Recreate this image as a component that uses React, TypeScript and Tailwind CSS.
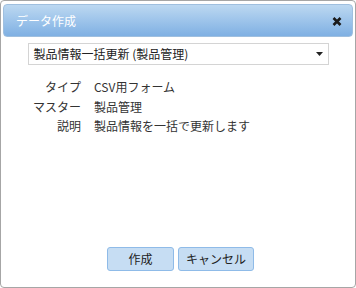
import React from "react";

const font = { fontFamily: '"Noto Sans CJK JP", "Noto Sans", sans-serif' };

export default function App() {
  return (
    <div
      className="w-[356px] h-[288px] bg-white border border-[#a6a6a6] rounded-[4px] flex flex-col pt-[3px] px-[2px] text-[#333]"
      style={font}
    >
      <div className="h-[33px] border border-[#9fbfdf] rounded-[4px] bg-gradient-to-b from-[#bcd8f1] to-[#7fb0e3] flex items-center pl-[12px] pr-[10px]">
        <span className="text-white text-[12px] leading-none flex-1">データ作成</span>
        <svg width="10" height="9" viewBox="0 0 10 9" className="mt-[1px]">
          <path d="M1.5 1 L8.5 8 M8.5 1 L1.5 8" stroke="#1a1a1a" strokeWidth="2.6" strokeLinecap="butt" />
        </svg>
      </div>

      <div className="mt-[6px] mx-auto w-[301px] h-[22px] border border-[#d4d4d4] flex items-center pl-[5px] pr-[5px] text-[12px] text-[#222]">
        <span className="flex-1 leading-none">製品情報一括更新 (製品管理)</span>
        <svg width="7" height="4" viewBox="0 0 7 4">
          <path d="M0 0 H7 L3.5 4 Z" fill="#222" />
        </svg>
      </div>

      <div className="mt-[12px] grid grid-cols-[51px_1fr] gap-x-[13px] pl-[27px] text-[12px] leading-[19.5px] text-[#333]">
        <span className="text-right">タイプ</span>
        <span>CSV用フォーム</span>
        <span className="text-right">マスター</span>
        <span>製品管理</span>
        <span className="text-right">説明</span>
        <span>製品情報を一括で更新します</span>
      </div>

      <div className="flex-1" />

      <div className="flex justify-center gap-[4px] pl-[5px] pb-[16px]">
        <button className="w-[67px] h-[24px] rounded-[3px] border border-[#8fbbe8] bg-[#c6ddf3] text-[12px] text-[#222] leading-none">
          作成
        </button>
        <button className="w-[76px] h-[24px] rounded-[3px] border border-[#8fbbe8] bg-[#c6ddf3] text-[12px] text-[#222] leading-none">
          キャンセル
        </button>
      </div>
    </div>
  );
}
